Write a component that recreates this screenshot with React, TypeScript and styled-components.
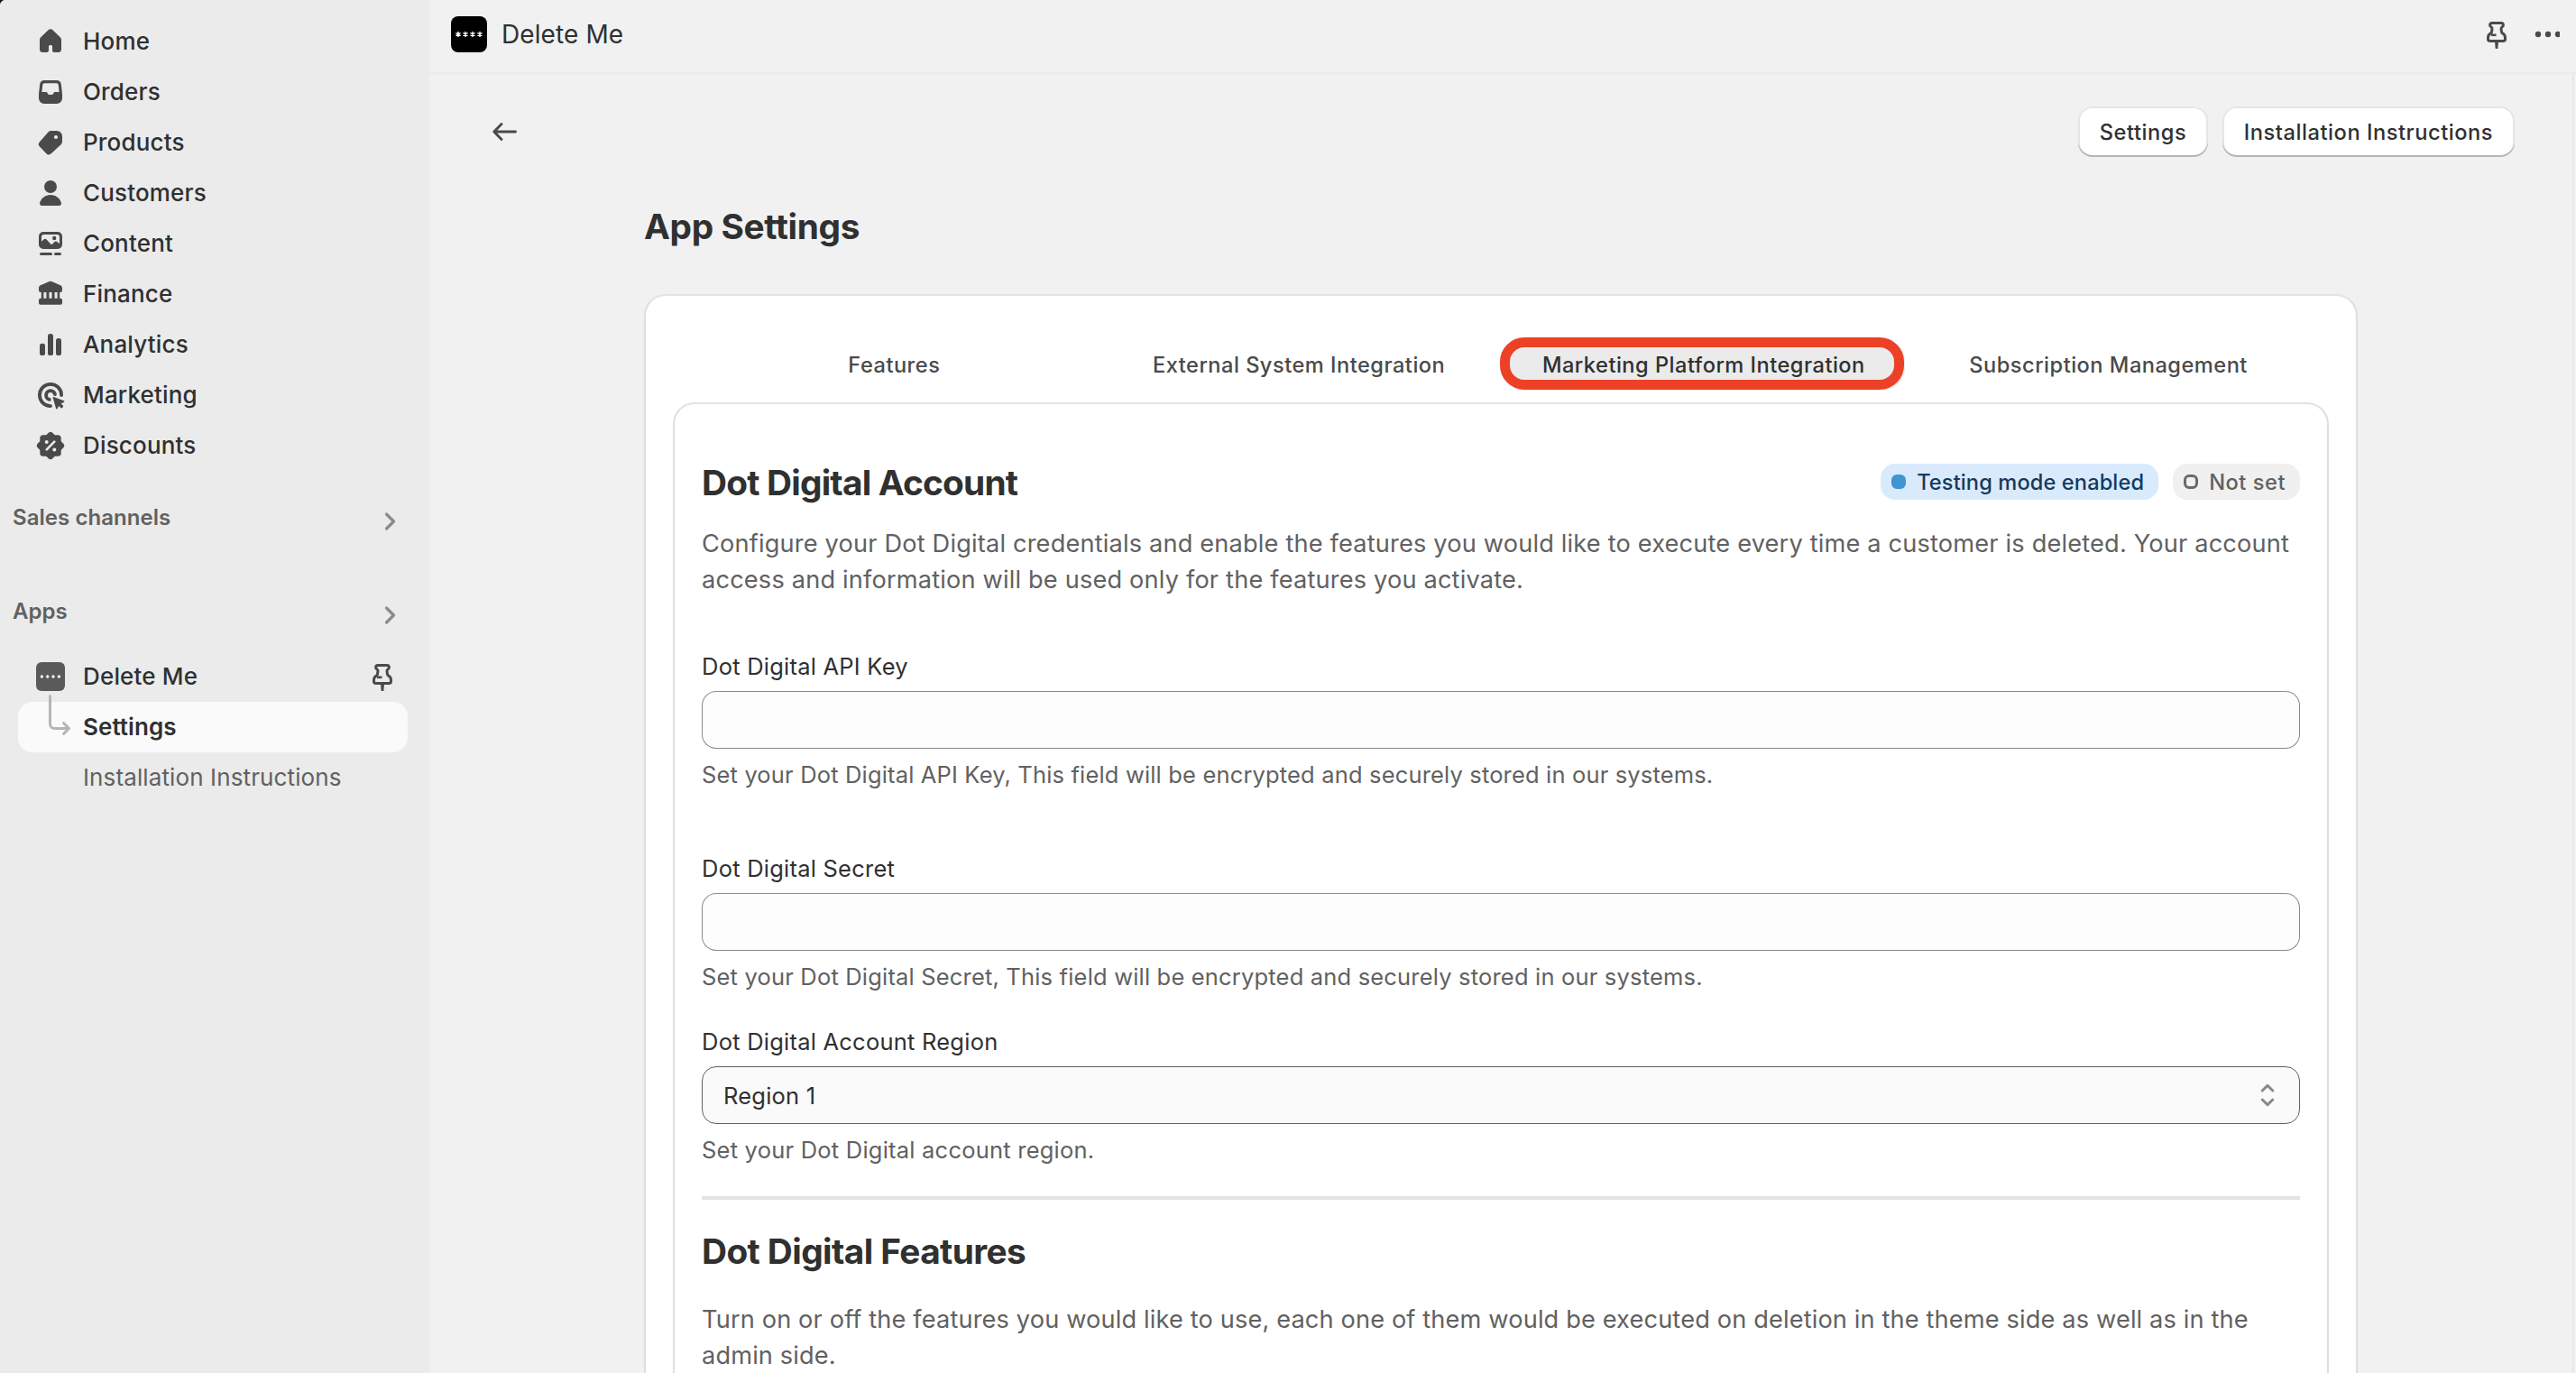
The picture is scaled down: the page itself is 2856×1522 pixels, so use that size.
import React from "react";
import styled, { createGlobalStyle, css } from "styled-components";

const GlobalStyle = createGlobalStyle`
  *, *::before, *::after { box-sizing: border-box; }
  html, body { margin: 0; height: 100%; overflow: hidden; }
  body {
    font-family: Inter, "Noto Sans", sans-serif;
    background: #f1f1f1;
    color: #303030;
    -webkit-font-smoothing: antialiased;
  }
  h1, h2, p { margin: 0; }
  button, input { font-family: inherit; }
`;

const Shell = styled.div`
  position: relative;
  display: flex;
  width: 100vw;
  height: 100vh;
  overflow: hidden;
`;

const WindowCorner = styled.svg`
  position: absolute;
  top: 0;
  left: 0;
  width: 5px;
  height: 5px;
`;

/* ---------- Sidebar ---------- */

const Sidebar = styled.nav`
  display: flex;
  flex-direction: column;
  flex: none;
  width: 476px;
  padding: 18px 24px 0 20px;
  background: #ebebeb;
`;

const NavItem = styled.a<{ $variant?: "section" | "active" | "sub" }>`
  display: flex;
  align-items: center;
  flex: none;
  height: 56px;
  padding: 0 16px;
  border-radius: 16px;
  font-size: 26px;
  line-height: 40px;
  letter-spacing: 0.17px;
  font-weight: 500;
  color: #303030;

  ${({ $variant }) =>
    $variant === "active" &&
    css`
      background: #fafafa;
      font-weight: 600;
      letter-spacing: 0.07px;
    `}
  ${({ $variant }) =>
    $variant === "sub" &&
    css`
      font-weight: 400;
      letter-spacing: 0.12px;
      color: #616161;
    `}
`;

const NavIcon = styled.svg`
  flex: none;
  width: 40px;
  height: 40px;
  margin-right: 16px;
  color: #4a4a4a;
  overflow: visible;
`;

const NavLabel = styled.span`
  flex: 1;
  white-space: nowrap;
`;

const GroupHeader = styled.div<{ $gap: number }>`
  display: flex;
  align-items: center;
  justify-content: space-between;
  height: 32px;
  margin: ${({ $gap }) => $gap}px 13px 0 -6px;
  font-size: 24px;
  font-weight: 600;
  line-height: 32px;
  letter-spacing: 0.05px;
  color: #616161;
`;

const GroupChevron = styled.svg`
  width: 14px;
  height: 22px;
  margin-top: 7px;
  color: #8a8a8a;
`;

const AppGroup = styled.div`
  display: flex;
  flex-direction: column;
  margin-top: 28px;
`;

const PinIcon = styled.svg`
  width: 24px;
  height: 32px;
  margin-top: 2px;
  color: #4a4a4a;
`;

/* ---------- Main column ---------- */

const Main = styled.main`
  display: flex;
  flex-direction: column;
  flex: 1;
  min-width: 0;
`;

const TopBar = styled.header`
  display: flex;
  align-items: center;
  flex: none;
  height: 82px;
  padding: 0 18px 4px 24px;
  border-bottom: 2px solid #ebebeb;
`;

const AppLogo = styled.svg`
  width: 40px;
  height: 40px;
`;

const TopTitle = styled.span`
  flex: 1;
  padding-left: 16px;
  font-size: 28px;
  line-height: 40px;
  letter-spacing: 0.1px;
`;

const MoreIcon = styled.svg`
  width: 28px;
  height: 8px;
  margin-left: 30px;
  color: #4a4a4a;
`;

const Frame = styled.div`
  display: flex;
  flex: 1;
  min-height: 0;
  overflow: hidden;
`;

const ScrollTrack = styled.div`
  flex: none;
  width: 4px;
  border-left: 2px solid #e6e6e6;
  background: #f3f3f3;
`;

const Page = styled.div`
  display: flex;
  flex-direction: column;
  flex: 1;
  min-width: 0;
`;

const ActionBar = styled.div`
  display: flex;
  align-items: center;
  justify-content: space-between;
  flex: none;
  height: 56px;
  margin-top: 36px;
  padding: 0 64px 0 70px;
`;

const BackArrow = styled.svg`
  width: 28px;
  height: 22px;
  color: #4a4a4a;
`;

const Buttons = styled.div`
  display: flex;
  gap: 16px;
`;

const Button = styled.button<{ $width: number }>`
  width: ${({ $width }) => $width}px;
  height: 56px;
  padding: 2px 0 0;
  border: 0;
  border-radius: 16px;
  background: #fff;
  box-shadow:
    inset 0 -2px 0 0 #b5b5b5,
    inset 0 0 0 2px rgba(0, 0, 0, 0.1),
    inset 0 3px 0 0 #fff;
  font-size: 23.6px;
  font-weight: 500;
  line-height: 54px;
  letter-spacing: 0.56px;
  color: #303030;
  white-space: nowrap;
`;

const Content = styled.div`
  display: flex;
  flex-direction: column;
  width: 1900px;
  margin: 52px auto 0;
`;

/* Sits text one pixel lower in its line box without changing the rhythm. */
const opticalShift = css`
  padding-top: 1px;
  margin-bottom: -1px;
`;

const Heading = styled.h2<{ $tracking: number }>`
  ${opticalShift}
  font-size: 38.8px;
  font-weight: 700;
  line-height: 48px;
  letter-spacing: ${({ $tracking }) => $tracking}px;
  white-space: nowrap;
`;

const cardEdge = css`
  border: 2px solid #dedede;
  border-top-color: #e3e3e3;
  border-bottom: 0;
  border-radius: 24px 24px 0 0;
  background: #fff;
`;

const Card = styled.section`
  ${cardEdge}
  flex: none;
  height: 1300px;
  margin-top: 52px;
  padding: 48px 30px 0;
`;

const Tabs = styled.div`
  display: grid;
  grid-template-columns: repeat(4, 1fr);
  gap: 2px;
  padding: 0 21px 0 22px;
`;

const Tab = styled.div<{ $selected?: boolean }>`
  position: relative;
  height: 56px;
  border-radius: 24px;
  background: ${({ $selected }) => ($selected ? "#ebebeb" : "transparent")};
  font-size: 23.6px;
  font-weight: 500;
  line-height: 58px;
  letter-spacing: 0.5px;
  text-align: center;
  color: ${({ $selected }) => ($selected ? "#303030" : "#4a4a4a")};
  white-space: nowrap;
`;

const Highlight = styled.span`
  position: absolute;
  top: -2px;
  left: -3px;
  width: 448px;
  height: 58px;
  border: 11px solid #ec4126;
  border-radius: 27px;
`;

const Panel = styled.div`
  ${cardEdge}
  height: 1200px;
  margin-top: 14px;
  padding: 62px 30px 0;
`;

const PanelHeader = styled.div`
  display: flex;
  align-items: center;
  justify-content: space-between;
  height: 48px;
`;

const Badges = styled.div`
  display: flex;
  gap: 16px;
`;

const Badge = styled.span<{ $info?: boolean }>`
  display: flex;
  align-items: center;
  height: 40px;
  padding: 0 16px 0 12px;
  border-radius: 16px;
  background: ${({ $info }) => ($info ? "#d9eafd" : "#f0f0f0")};
  color: ${({ $info }) => ($info ? "#153a5e" : "#616161")};
  font-size: 23.6px;
  font-weight: 500;
  line-height: 40px;
  letter-spacing: ${({ $info }) => ($info ? 0.12 : 0.55)}px;
  white-space: nowrap;
`;

const BadgeText = styled.span`
  padding-top: 1px;
`;

const BadgeDot = styled.span<{ $filled?: boolean }>`
  width: 16px;
  height: 16px;
  margin-right: 12px;
  border-radius: 6px;
  border: 3px solid ${({ $filled }) => ($filled ? "#4194d2" : "#6a6a6a")};
  background: ${({ $filled }) => ($filled ? "#4194d2" : "transparent")};
`;

const Paragraph = styled.p<{ $gap: number; $tracking: number }>`
  ${opticalShift}
  margin-top: ${({ $gap }) => $gap}px;
  font-size: 27.2px;
  line-height: 40px;
  letter-spacing: ${({ $tracking }) => $tracking}px;
  color: #616161;
`;

const Field = styled.div<{ $gap: number }>`
  display: flex;
  flex-direction: column;
  gap: 8px;
  margin-top: ${({ $gap }) => $gap}px;
`;

const FieldLabel = styled.label`
  ${opticalShift}
  font-size: 25.5px;
  line-height: 40px;
  letter-spacing: 0.23px;
`;

const TextInput = styled.input`
  width: 100%;
  height: 64px;
  border: 1px solid #8a8a8a;
  border-top-color: #898f94;
  border-radius: 16px;
  background: #fdfdfd;
  outline: none;
`;

const Select = styled.div`
  display: flex;
  align-items: center;
  justify-content: space-between;
  height: 64px;
  padding: 0 27px 0 23px;
  border: 1px solid #616161;
  border-radius: 16px;
  background: #fafafa;
  font-size: 25.5px;
  line-height: 40px;
  letter-spacing: 0.22px;
`;

const SelectValue = styled.span`
  padding-top: 1px;
`;

const SelectArrows = styled.svg`
  width: 16px;
  height: 26px;
  color: #8a8a8a;
`;

const HelpText = styled.p<{ $tracking?: number }>`
  ${opticalShift}
  font-size: 25.5px;
  line-height: 40px;
  letter-spacing: ${({ $tracking = 0.16 }) => $tracking}px;
  color: #616161;
`;

const Divider = styled.hr`
  height: 4px;
  margin: 32px 0;
  border: 0;
  background: #e3e3e3;
`;

/* ---------- Icons (40 × 40 grid) ---------- */

const icons: Record<string, React.ReactNode> = {
  Home: (
    <path
      fill="currentColor"
      d="M17.6 7.3a3.6 3.6 0 0 1 4.8 0l8.1 7.6A4.6 4.6 0 0 1 32 18.3V28.5a3.5 3.5 0 0 1-3.5 3.5H24a2 2 0 0 1-2-2v-4.5c0-.9-.7-1.5-1.5-1.5h-1c-.8 0-1.5.6-1.5 1.5V30a2 2 0 0 1-2 2h-4.5A3.5 3.5 0 0 1 8 28.5V18.3c0-1.3.5-2.5 1.5-3.4z"
    />
  ),
  Orders: (
    <path
      fill="currentColor"
      fillRule="evenodd"
      d="M13.2 7h13.6a5 5 0 0 1 5 4.5L33 22v5a6 6 0 0 1-6 6H13a6 6 0 0 1-6-6v-5l1.2-10.5A5 5 0 0 1 13.2 7zM13.3 10.2a2 2 0 0 0-2 1.8l-.9 8h4.4c.9 0 1.5.5 1.9 1.3.4 1 .9 1.6 1.8 1.6h3c.9 0 1.4-.6 1.8-1.6.4-.8 1-1.3 1.9-1.3h4.4l-.9-8a2 2 0 0 0-2-1.8z"
    />
  ),
  Products: (
    <path
      fill="currentColor"
      fillRule="evenodd"
      d="M20.8 7H27a6 6 0 0 1 6 6v5.8c0 1.3-.5 2.5-1.4 3.4L21 32a4.2 4.2 0 0 1-5.9-.1l-6.9-7.1a4.2 4.2 0 0 1 0-5.9L17.4 8.4A4.8 4.8 0 0 1 20.8 7zM26 11.9a2.1 2.1 0 1 0 0 4.2 2.1 2.1 0 0 0 0-4.2z"
    />
  ),
  Customers: (
    <g fill="currentColor">
      <circle cx="20" cy="13" r="7" />
      <path d="M8.2 30.5C9.8 25.5 14.5 22 20 22s10.2 3.5 11.8 8.5c.6 1.9-.5 3.5-2.3 3.5h-19c-1.8 0-2.9-1.6-2.3-3.5z" />
    </g>
  ),
  Content: (
    <g fill="currentColor">
      <path
        fillRule="evenodd"
        d="M12 7h16a5 5 0 0 1 5 5v9a5 5 0 0 1-5 5H12a5 5 0 0 1-5-5v-9a5 5 0 0 1 5-5zM12.5 10a2.5 2.5 0 0 0-2.5 2.5v5.2l2.7-2.5c.8-.7 1.9-.7 2.7.1l5.1 5.5c.4.4.9.4 1.3 0l2.7-2.7c.8-.8 2-.8 2.9-.1l2.6 2.3v-7.8a2.5 2.5 0 0 0-2.5-2.5z"
      />
      <circle cx="24.2" cy="14" r="2.2" />
      <rect x="8" y="30" width="14" height="3" rx="1.5" />
      <rect x="24" y="30" width="8" height="3" rx="1.5" />
    </g>
  ),
  Finance: (
    <path
      fill="currentColor"
      fillRule="evenodd"
      d="M18.7 6a3.3 3.3 0 0 1 2.6 0l9.8 4.3A3.2 3.2 0 0 1 33 13.2V16a2 2 0 0 1-2 2h-.8v6.7H31a2 2 0 0 1 2 2v3.1a2 2 0 0 1-2 2H9a2 2 0 0 1-2-2v-3.1a2 2 0 0 1 2-2h.8V18H9a2 2 0 0 1-2-2v-2.8c0-1.3.7-2.4 1.9-2.9zM12.4 18v6.7h3V18zM18.5 18v6.7h3V18zM24.6 18v6.7h3V18z"
    />
  ),
  Analytics: (
    <g fill="currentColor">
      <rect x="8" y="18.7" width="6" height="13.3" rx="2.6" />
      <rect x="17" y="8" width="6" height="24" rx="2.6" />
      <rect x="26" y="13" width="6" height="19" rx="2.6" />
    </g>
  ),
  Marketing: (
    <g fill="none" stroke="currentColor" strokeWidth="3.8" strokeLinecap="round">
      <path d="M32.1 20a12.1 12.1 0 1 0-12.1 12.1" />
      <path d="M25 19.2a5 5 0 1 0-6.2 5.7" />
      <path
        d="M23.4 22.8l11.2 4.3-4.2 2.2 3 3.1-1.3 1.3-3-3.1-2.2 4.1z"
        fill="currentColor"
        strokeWidth="1.6"
        strokeLinejoin="round"
      />
    </g>
  ),
  Discounts: (
    <g>
      <rect x="8.3" y="8.3" width="23.4" height="23.4" rx="3.5" fill="currentColor" />
      <rect
        x="8.3"
        y="8.3"
        width="23.4"
        height="23.4"
        rx="3.5"
        fill="currentColor"
        transform="rotate(45 20 20)"
      />
      <path d="M24.3 15.7l-8.6 8.6" stroke="#ebebeb" strokeWidth="2.6" strokeLinecap="round" />
      <circle cx="15.7" cy="16" r="2" fill="#ebebeb" />
      <circle cx="24.3" cy="24.6" r="2" fill="#ebebeb" />
    </g>
  ),
  App: (
    <g>
      <rect x="4" y="4" width="32" height="32" rx="6" fill="#5a5a5a" />
      {[10.4, 16.7, 23, 29.4].map((x) => (
        <path
          key={x}
          d={`M${x - 1.7} 20h3.4M${x} 18.3v3.4`}
          stroke="#fff"
          strokeWidth="1.6"
        />
      ))}
    </g>
  ),
  Branch: (
    <path
      d="M19.5 -14.5V16.5a5 5 0 0 0 5 5H40M34.5 15.5l6 6-6 6"
      fill="none"
      stroke="#b5b5b5"
      strokeWidth="3"
      strokeLinecap="round"
      strokeLinejoin="round"
    />
  ),
};

const Pin = () => (
  <PinIcon viewBox="0 0 24 32" fill="none" stroke="currentColor">
    <path
      d="M7 2.5h10c1.4 0 2.4 1 2.4 2.3 0 1-.6 1.7-1.5 2.2-.7.4-1 1-.9 1.8l.5 3.7c.1.8.6 1.3 1.3 1.7 1.8.9 2.7 2.6 2.7 4.7v1.3c0 1.3-.9 2.3-2.2 2.3H4.7c-1.3 0-2.2-1-2.2-2.3v-1.3c0-2.1.9-3.8 2.7-4.7.7-.4 1.2-.9 1.3-1.7L7 8.800c.1-.8-.2-1.400-.9-1.800-.9-.5-1.500-1.200-1.500-2.200C4.600 3.500 5.600 2.500 7 2.500z"
      strokeWidth="3"
      strokeLinejoin="round"
    />
    <path d="M6 15.8h5.5" strokeWidth="2.6" />
    <path d="M10 23h4l-.6 7.2c-.2 1.2-2.6 1.2-2.8 0z" fill="currentColor" stroke="none" />
  </PinIcon>
);

const Chevron = () => (
  <GroupChevron viewBox="0 0 14 22" fill="none">
    <path
      d="M3.5 3l8 8-8 8"
      stroke="currentColor"
      strokeWidth="3.2"
      strokeLinecap="round"
      strokeLinejoin="round"
    />
  </GroupChevron>
);

const navItems = [
  "Home",
  "Orders",
  "Products",
  "Customers",
  "Content",
  "Finance",
  "Analytics",
  "Marketing",
  "Discounts",
];

const tabs = [
  "Features",
  "External System Integration",
  "Marketing Platform Integration",
  "Subscription Management",
];

export default function App() {
  return (
    <>
      <GlobalStyle />
      <Shell>
        <Sidebar>
          {navItems.map((name) => (
            <NavItem key={name}>
              <NavIcon viewBox="0 0 40 40">{icons[name]}</NavIcon>
              <NavLabel>{name}</NavLabel>
            </NavItem>
          ))}
          <GroupHeader $gap={36}>
            Sales channels
            <Chevron />
          </GroupHeader>
          <GroupHeader $gap={72}>
            Apps
            <Chevron />
          </GroupHeader>
          <AppGroup>
            <NavItem $variant="section">
              <NavIcon viewBox="0 0 40 40">{icons.App}</NavIcon>
              <NavLabel>Delete Me</NavLabel>
              <Pin />
            </NavItem>
            <NavItem $variant="active">
              <NavIcon viewBox="0 0 40 40">{icons.Branch}</NavIcon>
              <NavLabel>Settings</NavLabel>
            </NavItem>
            <NavItem $variant="sub">
              <NavIcon viewBox="0 0 40 40" />
              <NavLabel>Installation Instructions</NavLabel>
            </NavItem>
          </AppGroup>
        </Sidebar>

        <Main>
          <TopBar>
            <AppLogo viewBox="0 0 40 40">
              <rect width="40" height="40" rx="8" fill="#000" />
              {[8, 16, 24, 32].map((x) => (
                <path
                  key={x}
                  d={`M${x} 17v6M${x - 2.6} 18.5l5.2 3M${x - 2.6} 21.5l5.2-3`}
                  stroke="#fff"
                  strokeWidth="1.4"
                />
              ))}
            </AppLogo>
            <TopTitle>Delete Me</TopTitle>
            <Pin />
            <MoreIcon viewBox="0 0 28 8">
              <circle cx="4" cy="4" r="3.2" fill="currentColor" />
              <circle cx="15" cy="4" r="3.2" fill="currentColor" />
              <circle cx="26" cy="4" r="3.2" fill="currentColor" />
            </MoreIcon>
          </TopBar>

          <Frame>
            <Page>
              <ActionBar>
                <BackArrow viewBox="0 0 28 22" fill="none">
                  <path
                    d="M25.5 11H2M10 2.5L1.8 11l8.2 8.5"
                    stroke="currentColor"
                    strokeWidth="2.9"
                    strokeLinecap="round"
                    strokeLinejoin="round"
                  />
                </BackArrow>
                <Buttons>
                  <Button $width={144}>Settings</Button>
                  <Button $width={324}>Installation Instructions</Button>
                </Buttons>
              </ActionBar>

              <Content>
                <Heading as="h1" $tracking={-0.38}>
                  App Settings
                </Heading>
                <Card>
                  <Tabs>
                    {tabs.map((name) => {
                      const selected = name.startsWith("Marketing");
                      return (
                        <Tab key={name} $selected={selected}>
                          {name}
                          {selected && <Highlight />}
                        </Tab>
                      );
                    })}
                  </Tabs>
                  <Panel>
                    <PanelHeader>
                      <Heading $tracking={-0.8}>Dot Digital Account</Heading>
                      <Badges>
                        <Badge $info>
                          <BadgeDot $filled />
                          <BadgeText>Testing mode enabled</BadgeText>
                        </Badge>
                        <Badge>
                          <BadgeDot />
                          <BadgeText>Not set</BadgeText>
                        </Badge>
                      </Badges>
                    </PanelHeader>
                    <Paragraph $gap={24} $tracking={0.17}>
                      Configure your Dot Digital credentials and enable the features you would like
                      to execute every time a customer is deleted. Your account access and
                      information will be used only for the features you activate.
                    </Paragraph>
                    <Field $gap={56}>
                      <FieldLabel htmlFor="api-key">Dot Digital API Key</FieldLabel>
                      <TextInput id="api-key" />
                      <HelpText>
                        Set your Dot Digital API Key, This field will be encrypted and securely
                        stored in our systems.
                      </HelpText>
                    </Field>
                    <Field $gap={64}>
                      <FieldLabel htmlFor="secret">Dot Digital Secret</FieldLabel>
                      <TextInput id="secret" />
                      <HelpText $tracking={0.18}>
                        Set your Dot Digital Secret, This field will be encrypted and securely
                        stored in our systems.
                      </HelpText>
                    </Field>
                    <Field $gap={32}>
                      <FieldLabel>Dot Digital Account Region</FieldLabel>
                      <Select>
                        <SelectValue>Region 1</SelectValue>
                        <SelectArrows viewBox="0 0 16 26" fill="none">
                          <path
                            d="M2.2 8L8 2.4 13.8 8M2.2 18L8 23.6 13.8 18"
                            stroke="currentColor"
                            strokeWidth="3"
                            strokeLinecap="round"
                            strokeLinejoin="round"
                          />
                        </SelectArrows>
                      </Select>
                      <HelpText $tracking={0.22}>Set your Dot Digital account region.</HelpText>
                    </Field>
                    <Divider />
                    <Heading $tracking={-0.6}>Dot Digital Features</Heading>
                    <Paragraph $gap={32} $tracking={0.14}>
                      Turn on or off the features you would like to use, each one of them would be
                      executed on deletion in the theme side as well as in the admin side.
                    </Paragraph>
                  </Panel>
                </Card>
              </Content>
            </Page>
            <ScrollTrack />
          </Frame>
        </Main>
        <WindowCorner viewBox="0 0 5 5">
          <path d="M0 0h4.5Q1 1 0 4.5z" fill="#111" />
        </WindowCorner>
      </Shell>
    </>
  );
}
